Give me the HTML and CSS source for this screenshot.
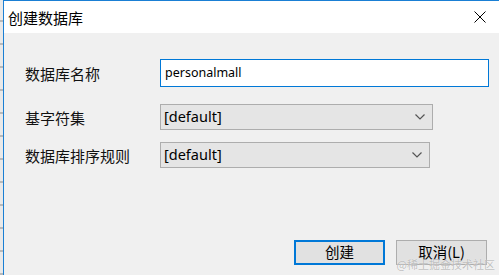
FILE: index.html
```html
<!DOCTYPE html>
<html lang="zh-CN">
<head>
    <meta charset="UTF-8">
    <title>创建数据库</title>
    <link rel="stylesheet" href="styles.css">
</head>
<body>
<div class="screen">
    <div class="backdrop"></div>
    <div class="dialog">
        <div class="dialog__title">
            <span class="dialog__caption">创建数据库</span>
            <svg class="dialog__close" width="12" height="12" viewBox="0 0 12 12">
                <path d="M0.5 0.5 L11.5 11.5 M11.5 0.5 L0.5 11.5" stroke="#000" stroke-width="1" fill="none"/>
            </svg>
        </div>
        <div class="dialog__body">
            <div class="form">
                <div class="form__row form__row--name">
                    <label class="form__label">数据库名称</label>
                    <input class="form__input" type="text" value="personalmall">
                </div>
                <div class="form__row form__row--charset">
                    <label class="form__label">基字符集</label>
                    <div class="form__select form__select--charset">
                        <span>[default]</span>
                        <svg width="10" height="6" viewBox="0 0 10 6"><path d="M0.5 0.5 L5 5 L9.5 0.5" stroke="#555" stroke-width="1.2" fill="none"/></svg>
                    </div>
                </div>
                <div class="form__row form__row--collation">
                    <label class="form__label">数据库排序规则</label>
                    <div class="form__select form__select--collation">
                        <span>[default]</span>
                        <svg width="10" height="6" viewBox="0 0 10 6"><path d="M0.5 0.5 L5 5 L9.5 0.5" stroke="#555" stroke-width="1.2" fill="none"/></svg>
                    </div>
                </div>
            </div>
            <div class="dialog__footer">
                <button class="btn btn--default">创建</button>
                <button class="btn">取消(L)</button>
            </div>
        </div>
        <div class="watermark">@稀土掘金技术社区</div>
    </div>
</div>
</body>
</html>
```

FILE: styles.css
```css
body, html {
    margin: 0;
    height: 100%;
    overflow: hidden;
    font-family: "Noto Sans CJK SC", "Noto Sans", sans-serif;
    color: #000;
}

.screen {
    display: flex;
    width: 499px;
    height: 275px;
}

/* window behind the dialog, only a sliver shows */
.backdrop {
    width: 3px;
    flex-shrink: 0;
    background-color: #e9e9e9;
    background-image: repeating-linear-gradient(to bottom, transparent 0, transparent 20px, #b9b9b9 20px, #b9b9b9 22px, transparent 22px, transparent 23px);
}

.dialog {
    position: relative;
    flex: 1;
    min-width: 0;
    display: flex;
    flex-direction: column;
    border-top: 1px solid #1a7fd4;
    border-left: 1px solid #1a7fd4;
    background-color: #f0f0f0;
    overflow: hidden;
}

.dialog__title {
    height: 32px;
    display: flex;
    align-items: center;
    justify-content: space-between;
    padding: 0 13px 0 4px;
    background-color: #fff;
}

.dialog__caption {
    font-size: 15px;
    line-height: 1;
}

.dialog__body {
    flex: 1;
    display: flex;
    flex-direction: column;
    padding: 26px 12px 10px 21px;
}

.form__row {
    display: flex;
    align-items: center;
}

.form__row--charset {
    margin-top: 17px;
}

.form__row--collation {
    margin-top: 12px;
}

.form__label {
    width: 135px;
    flex-shrink: 0;
    font-size: 15px;
    color: #111;
}

.form__input {
    box-sizing: border-box;
    width: 329px;
    flex-shrink: 0;
    height: 28px;
    margin: 0;
    padding: 0 0 2px 4px;
    border: 1px solid #0078d7;
    background-color: #fff;
    font-family: "Noto Sans", sans-serif;
    font-size: 12.5px;
    color: #000;
    outline: none;
}

.form__select {
    box-sizing: border-box;
    height: 26px;
    flex-shrink: 0;
    display: flex;
    align-items: center;
    justify-content: space-between;
    padding: 0 7px 0 3px;
    border: 1px solid #adadad;
    background-color: #e5e5e5;
    font-family: "Noto Sans", sans-serif;
    font-size: 14.5px;
}

.form__select span {
    margin-top: -2px;
}

.form__select--charset {
    width: 273px;
}

.form__select--collation {
    width: 270px;
}

.dialog__footer {
    margin-top: auto;
    display: flex;
    justify-content: flex-end;
    gap: 11px;
}

.btn {
    box-sizing: border-box;
    width: 91px;
    height: 25px;
    padding: 0;
    border: 1px solid #adadad;
    background-color: #e1e1e1;
    font-family: "Noto Sans CJK SC", sans-serif;
    font-size: 14.5px;
    line-height: 1;
    color: #000;
}

.btn--default {
    border: 2px solid #0078d7;
}

.watermark {
    position: absolute;
    right: 4px;
    bottom: 5px;
    font-size: 11px;
    line-height: 1;
    color: rgba(140, 140, 140, 0.55);
    text-shadow: 0 0 1px #fff;
}
```
